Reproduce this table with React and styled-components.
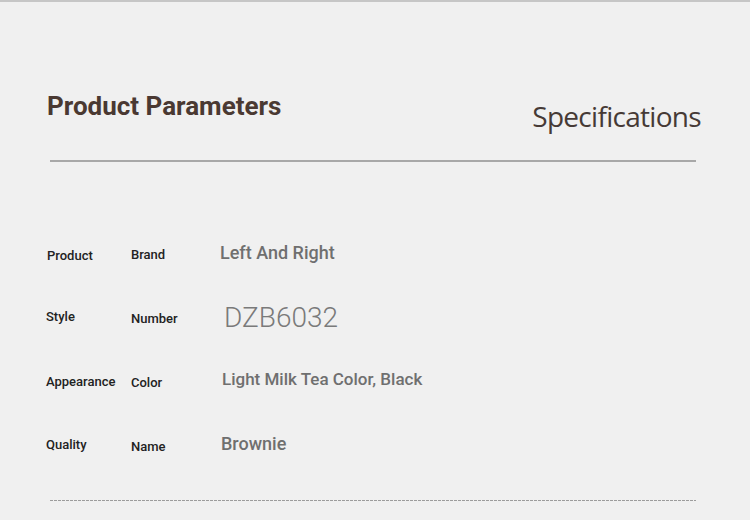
import React from "react";
import styled, { createGlobalStyle } from "styled-components";

const GlobalStyle = createGlobalStyle`
  body {
    margin: 0;
    background: #f0f0f0;
    font-family: Roboto, "Liberation Sans", sans-serif;
  }
`;

const Page = styled.div`
  width: 750px;
  height: 520px;
  box-sizing: border-box;
  border-top: 2px solid #c6c6c6;
  background: #f0f0f0;
  overflow: hidden;
`;

const Header = styled.div`
  display: flex;
  justify-content: space-between;
  align-items: flex-start;
  padding: 86px 49px 0 47px;
  height: 72px;
`;

const Title = styled.h1`
  margin: 0;
  font-family: Roboto, sans-serif;
  font-weight: 700;
  font-size: 26px;
  line-height: 36px;
  color: #4a3932;
`;

const Subtitle = styled.div`
  margin-top: 10px;
  font-family: "Open Sans", sans-serif;
  font-size: 28px;
  letter-spacing: -0.7px;
  line-height: 36px;
  color: #463a36;
`;

const Rule = styled.div`
  margin: 0 54px 0 50px;
  height: 2px;
  background: #a8a8a8;
`;

const Table = styled.div`
  display: grid;
  grid-template-columns: 84px 89px 1fr;
  grid-auto-rows: 63px;
  align-items: center;
  margin-top: 62px;
  padding-left: 46px;
`;

const Label = styled.div`
  font-size: 13px;
  font-weight: 500;
  color: #222;
  margin-left: ${(p) => p.$dx || 0}px;
  transform: translateY(${(p) => p.$dy || 0}px);
`;

const Value = styled.div`
  font-size: ${(p) => p.$size}px;
  font-weight: ${(p) => (p.$big ? 300 : 500)};
  color: ${(p) => (p.$big ? "#7a7a7a" : "#6f6f6f")};
  margin-left: ${(p) => p.$dx || 0}px;
  transform: translateY(${(p) => p.$dy || 0}px);
`;

const Dashed = styled.div`
  margin: 24px 54px 0 50px;
  height: 1px;
  background: repeating-linear-gradient(
    90deg,
    #9c9c9c 0 3px,
    transparent 3px 4px
  );
`;

const rows = [
  { a: "Product", b: "Brand", v: "Left And Right", size: 18, ady: 0, bdy: -1, vdy: -3, adx: 1, vdx: 1 },
  { a: "Style", b: "Number", v: "DZB6032", big: true, size: 28, ady: -2, bdy: 0, vdy: -1, vdx: 5 },
  { a: "Appearance", b: "Color", v: "Light Milk Tea Color, Black", size: 17, ady: 0, bdy: 1, vdy: -3, vdx: 3 },
  { a: "Quality", b: "Name", v: "Brownie", size: 18, ady: 0, bdy: 2, vdy: -1, vdx: 2 },
];

export default function App() {
  return (
    <Page>
      <GlobalStyle />
      <Header>
        <Title>Product Parameters</Title>
        <Subtitle>Specifications</Subtitle>
      </Header>
      <Rule />
      <Table>
        {rows.map((r) => (
          <React.Fragment key={r.a}>
            <Label $dx={r.adx} $dy={r.ady}>{r.a}</Label>
            <Label $dx={1} $dy={r.bdy}>{r.b}</Label>
            <Value $big={r.big} $size={r.size} $dx={r.vdx} $dy={r.vdy}>
              {r.v}
            </Value>
          </React.Fragment>
        ))}
      </Table>
      <Dashed />
    </Page>
  );
}
